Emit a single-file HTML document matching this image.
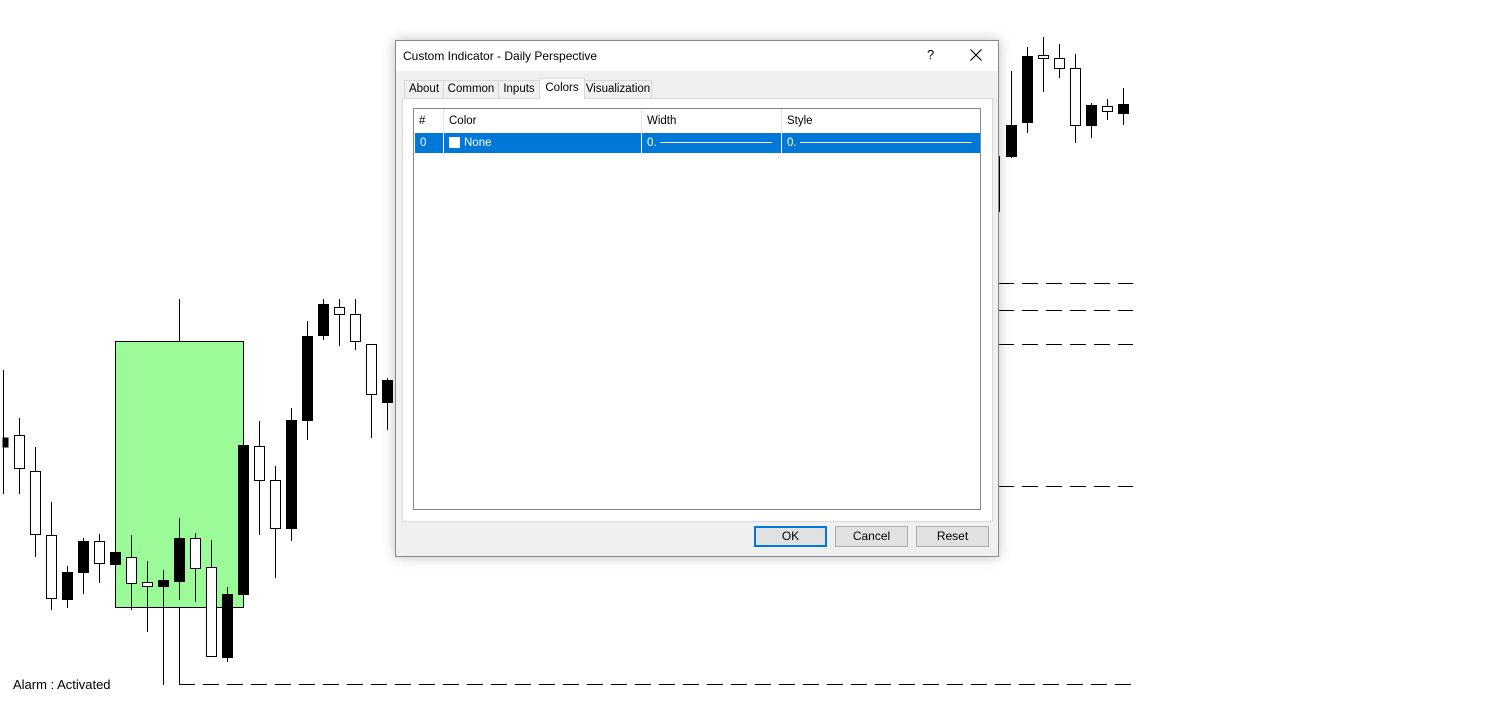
<!DOCTYPE html>
<html><head><style>
body{margin:0;width:1486px;height:722px;background:#fff;position:relative;overflow:hidden;font-family:"Liberation Sans",sans-serif;}
svg{position:absolute;left:0;top:0}
.dlg{position:absolute;left:395px;top:40px;width:602px;height:515px;background:#f0f0f0;border:1px solid #8a8a8a;box-shadow:0 0 12px rgba(0,0,0,.25);font-size:12px;color:#000}
.tb{position:absolute;left:0;top:0;width:602px;height:30px;background:#fff}
.ab{position:absolute;font-size:12px}
.tab{position:absolute;top:39px;height:17px;border:1px solid #d9d9d9;border-bottom:none;background:#f0f0f0;line-height:17px;text-align:center;font-size:11.5px}
.panel{position:absolute;left:6px;top:57px;width:589px;height:422px;background:#fff;border:1px solid #d9d9d9}
.list{position:absolute;left:10px;top:9px;width:566px;height:400px;border:1px solid #828790;background:#fff}
.hd{position:absolute;top:0;height:24px;line-height:24px;border-right:1px solid #e5e5e5;padding-left:5px;box-sizing:border-box;font-size:11.5px}
.row{position:absolute;left:1px;top:24px;width:565px;height:20px;background:#0078d7;color:#fff;font-size:11.5px;line-height:20px}
.row div{position:absolute;top:0;height:20px;border-right:1px solid #fff;box-sizing:border-box;padding-left:5px}
.btn{position:absolute;top:485px;width:71px;height:19px;border:1px solid #adadad;background:#e1e1e1;text-align:center;line-height:19px;font-size:12px}
</style></head><body>
<svg width="1486" height="722" viewBox="0 0 1486 722" shape-rendering="crispEdges">
<rect x="115.5" y="341.5" width="128" height="266" fill="#9afb98" stroke="#000"/>
<g stroke="#000" stroke-width="1.2" fill="none">
<line x1="179.5" y1="299" x2="179.5" y2="341"/>
<line x1="179.5" y1="607" x2="179.5" y2="684"/>
<line x1="179" y1="684.5" x2="195" y2="684.5"/>
<line x1="203" y1="684.5" x2="1133" y2="684.5" stroke-dasharray="16,8"/>
<line x1="998" y1="283.5" x2="1133" y2="283.5" stroke-dasharray="16,8"/>
<line x1="998" y1="310.5" x2="1133" y2="310.5" stroke-dasharray="16,8"/>
<line x1="998" y1="344.5" x2="1133" y2="344.5" stroke-dasharray="16,8"/>
<line x1="998" y1="486.5" x2="1133" y2="486.5" stroke-dasharray="16,8"/>
</g>
<g stroke="#000" stroke-width="1">
<line x1="3.5" y1="370" x2="3.5" y2="494"/><rect x="3" y="438" width="5" height="9" fill="#000"/>
<line x1="19.5" y1="418" x2="19.5" y2="494"/><rect x="14.5" y="435.5" width="10" height="33" fill="#fff"/>
<line x1="35.5" y1="447" x2="35.5" y2="557"/><rect x="30.5" y="471.5" width="10" height="63" fill="#fff"/>
<line x1="51.5" y1="502" x2="51.5" y2="610"/><rect x="46.5" y="535.5" width="10" height="63" fill="#fff"/>
<line x1="67.5" y1="566" x2="67.5" y2="608"/><rect x="62.5" y="572.5" width="10" height="27" fill="#000"/>
<line x1="83.5" y1="538" x2="83.5" y2="594"/><rect x="78.5" y="541.5" width="10" height="31" fill="#000"/>
<line x1="99.5" y1="534" x2="99.5" y2="583"/><rect x="94.5" y="541.5" width="10" height="22" fill="#fff"/>
<rect x="110.5" y="552.5" width="10" height="12" fill="#000"/>
<line x1="131.5" y1="535" x2="131.5" y2="610"/><rect x="126.5" y="557.5" width="10" height="26" fill="#fff"/>
<line x1="147.5" y1="561" x2="147.5" y2="632"/><rect x="142.5" y="582.5" width="10" height="4" fill="#fff"/>
<line x1="163.5" y1="570" x2="163.5" y2="685"/><rect x="158.5" y="580.5" width="10" height="6" fill="#000"/>
<line x1="179.5" y1="518" x2="179.5" y2="600"/><rect x="174.5" y="538.5" width="10" height="43" fill="#000"/>
<line x1="195.5" y1="533" x2="195.5" y2="602"/><rect x="190.5" y="538.5" width="10" height="30" fill="#fff"/>
<line x1="211.5" y1="540" x2="211.5" y2="657"/><rect x="206.5" y="567.5" width="10" height="89" fill="#fff"/>
<line x1="227.5" y1="587" x2="227.5" y2="662"/><rect x="222.5" y="594.5" width="10" height="63" fill="#000"/>
<rect x="238.5" y="445.5" width="10" height="149" fill="#000"/>
<line x1="259.5" y1="421" x2="259.5" y2="535"/><rect x="254.5" y="446.5" width="10" height="34" fill="#fff"/>
<line x1="275.5" y1="466" x2="275.5" y2="578"/><rect x="270.5" y="480.5" width="10" height="48" fill="#fff"/>
<line x1="291.5" y1="408" x2="291.5" y2="541"/><rect x="286.5" y="420.5" width="10" height="108" fill="#000"/>
<line x1="307.5" y1="321" x2="307.5" y2="440"/><rect x="302.5" y="336.5" width="10" height="84" fill="#000"/>
<line x1="323.5" y1="299" x2="323.5" y2="340"/><rect x="318.5" y="304.5" width="10" height="31" fill="#000"/>
<line x1="339.5" y1="299" x2="339.5" y2="346"/><rect x="334.5" y="307.5" width="10" height="7" fill="#fff"/>
<line x1="355.5" y1="299" x2="355.5" y2="350"/><rect x="350.5" y="314.5" width="10" height="27" fill="#fff"/>
<line x1="371.5" y1="344" x2="371.5" y2="438"/><rect x="366.5" y="344.5" width="10" height="50" fill="#fff"/>
<line x1="387.5" y1="378" x2="387.5" y2="430"/><rect x="382.5" y="380.5" width="10" height="22" fill="#000"/>
<rect x="998" y="156" width="2" height="56" fill="#000" stroke="none"/>
<line x1="1011.5" y1="71" x2="1011.5" y2="158"/><rect x="1006.5" y="125.5" width="10" height="31" fill="#000"/>
<line x1="1027.5" y1="47" x2="1027.5" y2="133"/><rect x="1022.5" y="56.5" width="10" height="66" fill="#000"/>
<line x1="1043.5" y1="37" x2="1043.5" y2="92"/><rect x="1038.5" y="55.5" width="10" height="3" fill="#fff"/>
<line x1="1059.5" y1="44" x2="1059.5" y2="78"/><rect x="1054.5" y="58.5" width="10" height="10" fill="#fff"/>
<line x1="1075.5" y1="54" x2="1075.5" y2="143"/><rect x="1070.5" y="68.5" width="10" height="57" fill="#fff"/>
<line x1="1091.5" y1="103" x2="1091.5" y2="138"/><rect x="1086.5" y="105.5" width="10" height="20" fill="#000"/>
<line x1="1107.5" y1="99" x2="1107.5" y2="120"/><rect x="1102.5" y="106.5" width="10" height="5" fill="#fff"/>
<line x1="1123.5" y1="88" x2="1123.5" y2="125"/><rect x="1118.5" y="104.5" width="10" height="9" fill="#000"/>
</g>
<text x="13" y="689" font-family="Liberation Sans" font-size="13" fill="#000" shape-rendering="auto">Alarm : Activated</text>
</svg>
<div class="dlg">
 <div class="tb"></div>
 <div class="ab" style="left:7px;top:8px">Custom Indicator - Daily Perspective</div>
 <div class="ab" style="left:531px;top:6px;font-size:13px">?</div>
 <svg style="left:574px;top:8px" width="12" height="12" viewBox="0 0 12 12"><path d="M0.5 0.5L11.5 11.5M11.5 0.5L0.5 11.5" stroke="#000" stroke-width="1.1"/></svg>
 <div class="tab" style="left:8px;width:38px">About</div>
 <div class="tab" style="left:47px;width:54px">Common</div>
 <div class="tab" style="left:102px;width:40px">Inputs</div>
 <div class="tab" style="left:143px;top:37px;height:20px;width:44px;background:#fff;line-height:18px;z-index:2">Colors</div>
 <div class="tab" style="left:188px;width:66px">Visualization</div>
 <div class="panel">
  <div class="list">
   <div class="hd" style="left:0;width:30px">#</div>
   <div class="hd" style="left:30px;width:198px">Color</div>
   <div class="hd" style="left:228px;width:140px">Width</div>
   <div class="hd" style="left:368px;width:198px;border:none">Style</div>
   <div class="row">
    <div style="left:0;width:29px">0</div>
    <div style="left:29px;width:198px"><span style="display:inline-block;width:11px;height:11px;background:#fff;vertical-align:-2px;margin-right:4px"></span>None</div>
    <div style="left:227px;width:140px">0. <span style="position:absolute;left:18px;top:9px;width:112px;height:1px;background:#fff"></span></div>
    <div style="left:367px;width:198px;border:none">0. <span style="position:absolute;left:18px;top:9px;width:172px;height:1px;background:#fff"></span></div>
   </div>
  </div>
 </div>
 <div class="btn" style="left:358px;border:2px solid #0078d7;width:69px;height:17px;line-height:17px">OK</div>
 <div class="btn" style="left:439px">Cancel</div>
 <div class="btn" style="left:520px">Reset</div>
</div>
</body></html>
